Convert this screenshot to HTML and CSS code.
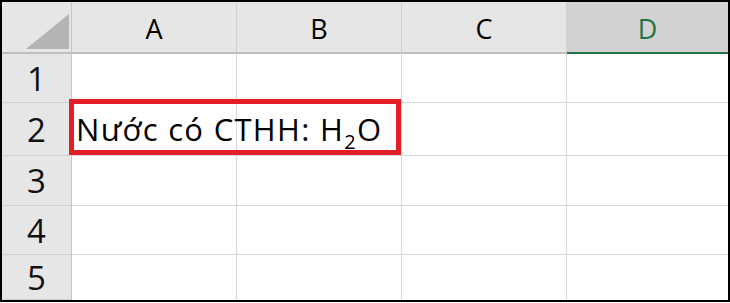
FILE: index.html
```html
<!DOCTYPE html>
<html lang="vi">
<head>
  <meta charset="UTF-8">
  <title>Excel - H2O</title>
  <link rel="stylesheet" href="styles.css">
</head>
<body>

<div class="sheet">
  <div class="grid">
    <!-- header row -->
    <div class="corner">
      <svg width="68" height="50" viewBox="0 0 68 50">
        <polygon points="24,47 67,47 67,12" fill="#b4b4b4"/>
      </svg>
    </div>
    <div class="col-head">A</div>
    <div class="col-head">B</div>
    <div class="col-head">C</div>
    <div class="col-head active">D</div>

    <!-- row 1 -->
    <div class="row-head">1</div>
    <div class="cell"></div>
    <div class="cell"></div>
    <div class="cell"></div>
    <div class="cell last"></div>

    <!-- row 2 -->
    <div class="row-head">2</div>
    <div class="cell text"><span>Nước có CTHH: H<span class="sub">2</span>O</span></div>
    <div class="cell"></div>
    <div class="cell"></div>
    <div class="cell last"></div>

    <!-- row 3 -->
    <div class="row-head">3</div>
    <div class="cell"></div>
    <div class="cell"></div>
    <div class="cell"></div>
    <div class="cell last"></div>

    <!-- row 4 -->
    <div class="row-head">4</div>
    <div class="cell"></div>
    <div class="cell"></div>
    <div class="cell"></div>
    <div class="cell last"></div>

    <!-- row 5 -->
    <div class="row-head">5</div>
    <div class="cell bottom"></div>
    <div class="cell bottom"></div>
    <div class="cell bottom"></div>
    <div class="cell bottom last"></div>
  </div>

  <!-- red highlight around A2 -->
  <div class="highlight"></div>
</div>

</body>
</html>
```

FILE: styles.css
```css
body {
  margin: 0;
  background: #fff;
  font-family: "Open Sans", "Noto Sans", sans-serif;
  color: #111;
}

.sheet {
  position: relative;
  width: 730px;
  height: 302px;
  box-sizing: border-box;
  border: 2px solid #000;
  overflow: hidden;
}

.grid {
  display: grid;
  grid-template-columns: 70px 165px 165px 165px 1fr;
  grid-template-rows: 52px 49px 53px 50px 49px 45px;
}

.grid > div {
  box-sizing: border-box;
}

.corner {
  background: #e6e6e6;
  border-right: 1px solid #c6c6c6;
  border-bottom: 2px solid #bfbfbf;
}

.corner svg {
  display: block;
}

.col-head {
  background: #e6e6e6;
  border-right: 1px solid #d0d0d0;
  border-bottom: 2px solid #bfbfbf;
  display: flex;
  align-items: center;
  justify-content: center;
  font-size: 27px;
  letter-spacing: 0;
  padding-top: 2px;
  color: #000;
}

.col-head.active {
  background: #d2d2d2;
  color: #217346;
  border-right: none;
  border-bottom-color: #217346;
}

.row-head {
  background: #e6e6e6;
  border-right: 1px solid #c6c6c6;
  border-bottom: 1px solid #d0d0d0;
  display: flex;
  align-items: center;
  justify-content: center;
  font-size: 33px;
}

.cell {
  border-right: 1px solid #d6d6d6;
  border-bottom: 1px solid #d6d6d6;
}

.cell.last {
  border-right: none;
}

.cell.bottom {
  border-bottom: none;
}

.cell.text {
  display: flex;
  align-items: center;
  padding-left: 4px;
  white-space: nowrap;
  font-size: 31px;
  letter-spacing: 1.3px;
  color: #000;
  position: relative;
  z-index: 1;
}

.cell.text .sub {
  font-size: 20px;
  position: relative;
  top: 8px;
}

.highlight {
  position: absolute;
  left: 67px;
  top: 97px;
  width: 332px;
  height: 56px;
  box-sizing: border-box;
  border: 5px solid #e31e26;
  z-index: 2;
}
```
